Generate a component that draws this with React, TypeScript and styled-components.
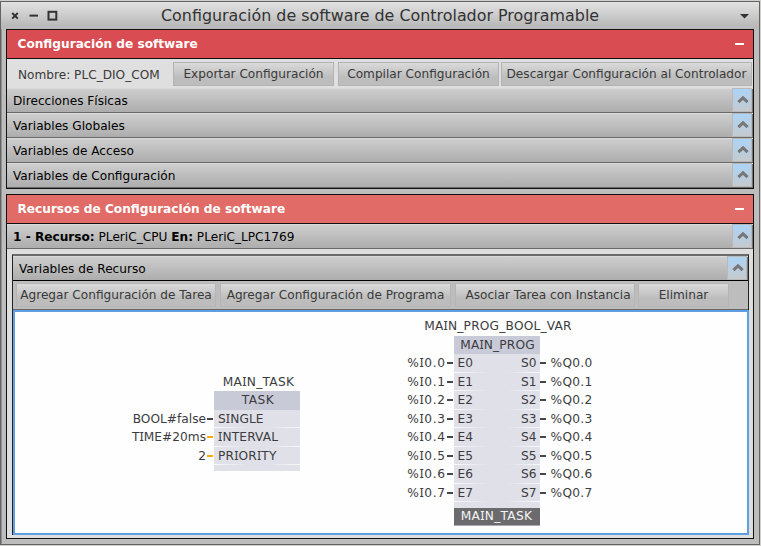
import React from 'react';
import styled, { createGlobalStyle, css } from 'styled-components';

const Global = createGlobalStyle`
  *, *::before, *::after { box-sizing: border-box; }
  body { margin: 0; background: #cfd0cd; }
`;

const Window = styled.div`
  width: 760px;
  height: 544px;
  margin-top: 1px;
  display: flex;
  flex-direction: column;
  border: 1px solid #636363;
  box-shadow: inset 1px 0 #929292;
  background: #bdbdbd;
  font-family: 'DejaVu Sans', sans-serif;
  font-size: 12.13px;
  color: #000;
  white-space: nowrap;
`;

const TitleBar = styled.header`
  flex: 0 0 27px;
  display: grid;
  grid-template-columns: 66px 1fr 28px;
  align-items: center;
  background: linear-gradient(#e2e2e2, #b9b9b9 90%);
  color: #333;
`;

const WindowTitle = styled.h1`
  margin: 0;
  padding-left: 94px;
  font-size: 15.9px;
  line-height: 25px;
  font-weight: normal;
`;

const WindowButtons = styled.svg`
  display: block;
  width: 66px;
  height: 26px;
`;

const MenuArrow = styled.svg`
  display: block;
  width: 28px;
  height: 26px;
`;

const Panel = styled.section<{ $height: number }>`
  height: ${(p) => p.$height}px;
  margin: 0 0 5px 5px;
  width: 748px;
  display: flex;
  flex-direction: column;
  border: 1px solid #111;
  background: #dedede;
`;

const PanelHeader = styled.header<{ $tone: string }>`
  flex: 0 0 29px;
  display: flex;
  align-items: center;
  justify-content: space-between;
  padding: 0 9px 0 10.5px;
  border-bottom: 1px solid #111;
  background: ${(p) => p.$tone};
  color: #fff;
  font-weight: bold;
`;

const Minus = styled.span`
  width: 9px;
  height: 2px;
  background: #fff;
`;

const Row = styled.div<{ $line?: string }>`
  flex: 0 0 25px;
  display: flex;
  align-items: center;
  justify-content: space-between;
  padding-left: 6px;
  border-bottom: 1px solid ${(p) => p.$line ?? '#6a6a6a'};
  box-shadow: inset 0 1px #dadada, inset -2px 0 #777;
  background: linear-gradient(#cfcfcf, #adadad);
`;

const RowLabel = styled.span`
  padding-top: 1px;
`;

const Expander = styled.button`
  width: 20px;
  height: 24px;
  margin-right: 1px;
  padding: 0 0 2px 1px;
  display: flex;
  align-items: center;
  justify-content: center;
  border: 1px solid #b9b9b9;
  background: linear-gradient(#acd4f6, #c5cacf);
`;

const ActionBar = styled.div`
  flex: 0 0 29px;
  display: flex;
  align-items: flex-start;
  padding-top: 3px;
  background: #dfdfdf;
  color: #3a3a3a;
`;

const ConfigName = styled.span`
  width: 166px;
  padding-left: 11px;
  line-height: 26px;
`;

const Button = styled.button<{ $width: number; $gap?: number; $shift?: number; $soft?: boolean }>`
  flex: 0 0 ${(p) => p.$width}px;
  height: 24px;
  margin: 0 ${(p) => p.$gap ?? 0}px 0 0;
  padding: 0 0 1px ${(p) => p.$shift ?? 0}px;
  border: 1px solid ${(p) => (p.$soft ? '#b5b5b5' : '#b3b3b3')};
  background: linear-gradient(#dadada, #bdbdbd 65%);
  color: #3a3a3a;
  font: inherit;
  line-height: 20px;
  white-space: nowrap;
`;

const ResourceBody = styled.div`
  flex: 1;
  display: flex;
  flex-direction: column;
  padding: 5px 4px 3px 5px;
  background: #dedede;
`;

const ResourceTools = styled.div`
  flex: 1;
  display: flex;
  flex-direction: column;
  border: solid #222;
  border-width: 2px 1px 0;
  border-top-color: #6c6c6c;
`;

const ResourceActions = styled(ActionBar)`
  padding: 2px 0 0 3px;
  border-bottom: 1px solid #666;
  background: #bdbdbd;
`;

const Canvas = styled.div`
  position: relative;
  flex: 0 0 225px;
  margin-right: -1px;
  border: 2px solid #5e9fe2;
  background: #fefefe;
  color: #3c3c40;
  font-size: 12.2px;
`;

const Node = styled.div<{ $x: number; $y: number; $columns: string }>`
  position: absolute;
  left: ${(p) => p.$x}px;
  top: ${(p) => p.$y}px;
  display: grid;
  grid-template-columns: ${(p) => p.$columns};
  grid-auto-rows: 18.5px;
  align-items: center;
  line-height: 18px;
`;

const centered = css`
  grid-column: 3;
  display: flex;
  justify-content: center;
  align-self: stretch;
`;

const NodeName = styled.div`
  ${centered}
  padding-left: 3px;
`;

const NodeType = styled.div`
  ${centered}
  padding-left: 2px;
  background: #c9cad8;
`;

const PinRow = styled.div`
  grid-column: 3;
  align-self: stretch;
  display: flex;
  justify-content: space-between;
  padding: 0 3px 0 4px;
  background:
    linear-gradient(90deg, #fafafc, #e0e0e8 40%, #e0e0e8 60%, #f8f8fb) bottom / 100% 1px no-repeat,
    #e0e0e8;
`;

const Operand = styled.span<{ $side: 'in' | 'out' }>`
  grid-column: ${(p) => (p.$side === 'in' ? 1 : 5)};
  justify-self: ${(p) => (p.$side === 'in' ? 'end' : 'start')};
  padding-right: ${(p) => (p.$side === 'in' ? '2px' : '0')};
  padding-left: ${(p) => (p.$side === 'out' ? '4px' : '0')};
`;

const Wire = styled.span<{ $side: 'in' | 'out'; $tone?: string }>`
  grid-column: ${(p) => (p.$side === 'in' ? 2 : 4)};
  height: 2px;
  margin-left: ${(p) => (p.$side === 'in' ? '-1px' : '0')};
  margin-right: 1px;
  background: ${(p) => p.$tone ?? '#45454a'};
`;

const NodeFoot = styled.div<{ $height: number }>`
  grid-column: 3;
  height: ${(p) => p.$height}px;
  align-self: start;
  background: #e0e0e8;
`;

const AssignedTask = styled.div`
  height: 18px;
  display: flex;
  justify-content: center;
  line-height: 16px;
  border-bottom: 1px solid #aaaab2;
  background: #6b6b6e;
  color: #f4f4f4;
`;

const FootGap = styled.div`
  height: 6px;
`;

const Caption = styled.span<{ $track: number }>`
  letter-spacing: ${(p) => p.$track}px;
`;

const Slab = styled.span`
  font-family: 'Noto Sans', sans-serif;
  font-size: 12.6px;
  line-height: 1px;
`;

function Label({ text, track = 0 }: { text: string; track?: number }) {
  return (
    <Caption $track={track}>
      {text.split(/(I)/).map((part, i) => (part === 'I' ? <Slab key={i}>I</Slab> : part))}
    </Caption>
  );
}

function Chevron() {
  return (
    <Expander>
      <svg width="12" height="9" viewBox="0 0 12 9">
        <path d="M1.4 7.2 L6 2.8 L10.6 7.2" fill="none" stroke="#777" strokeWidth="3" />
      </svg>
    </Expander>
  );
}

const variableRows = ['Direcciones Físicas', 'Variables Globales', 'Variables de Acceso', 'Variables de Configuración'];

const taskPins = [
  { operand: 'BOOL#false', name: 'SINGLE', track: 0.1, opTrack: 0, tone: '#45454a' },
  { operand: 'TIME#20ms', name: 'INTERVAL', track: 0.15, opTrack: 0, tone: '#ffa800' },
  { operand: '2', name: 'PRIORITY', track: 0.15, opTrack: 0, tone: '#ffa800' },
];

const programPins = [0, 1, 2, 3, 4, 5, 6, 7];

export default function App() {
  return (
    <>
      <Global />
      <Window>
        <TitleBar>
          <WindowButtons viewBox="0 0 66 26" fill="none" stroke="#333" strokeWidth="2">
            <path d="M11.2 10 L16.8 15.6 M16.8 10 L11.2 15.6" />
            <path d="M28.5 12.6 H37" />
            <rect x="47.5" y="8.8" width="7.8" height="7.8" />
          </WindowButtons>
          <WindowTitle>Configuración de software de Controlador Programable</WindowTitle>
          <MenuArrow viewBox="0 0 28 26">
            <path d="M9 11 H18 L13.5 15.5 Z" fill="#333" />
          </MenuArrow>
        </TitleBar>

        <Panel $height={160}>
          <PanelHeader $tone="#d94c51">
            Configuración de software
            <Minus />
          </PanelHeader>
          <ActionBar>
            <ConfigName>Nombre: PLC_DIO_COM</ConfigName>
            <Button $width={161} $gap={4}>Exportar Configuración</Button>
            <Button $width={161} $gap={2}>Compilar Configuración</Button>
            <Button $width={251}>Descargar Configuración al Controlador</Button>
          </ActionBar>
          {variableRows.map((name) => (
            <Row key={name}>
              <RowLabel>{name}</RowLabel>
              <Chevron />
            </Row>
          ))}
        </Panel>

        <Panel $height={345}>
          <PanelHeader $tone="#e16b66">
            Recursos de Configuración de software
            <Minus />
          </PanelHeader>
          <Row>
            <RowLabel>
              <b>1 - Recurso:</b> PLeriC_CPU <b>En:</b> PLeriC_LPC1769
            </RowLabel>
            <Chevron />
          </Row>
          <ResourceBody>
            <ResourceTools>
              <Row $line="#000">
                <RowLabel>Variables de Recurso</RowLabel>
                <Chevron />
              </Row>
              <ResourceActions>
                <Button $soft $width={200} $gap={4}>Agregar Configuración de Tarea</Button>
                <Button $soft $width={231} $gap={4}>Agregar Configuración de Programa</Button>
                <Button $soft $width={180} $gap={3} $shift={6}>Asociar Tarea con Instancia</Button>
                <Button $soft $width={91}>Eliminar</Button>
              </ResourceActions>
              <Canvas>
                <Node $x={115} $y={60.5} $columns="78px 6px 86px">
                  <NodeName><Label text="MAIN_TASK" track={0.3} /></NodeName>
                  <NodeType><Label text="TASK" track={0.45} /></NodeType>
                  {taskPins.map((pin) => (
                    <React.Fragment key={pin.name}>
                      <Operand $side="in"><Label text={pin.operand} track={pin.opTrack} /></Operand>
                      <Wire $side="in" $tone={pin.tone} />
                      <PinRow><Label text={pin.name} track={pin.track} /></PinRow>
                    </React.Fragment>
                  ))}
                  <NodeFoot $height={6} />
                </Node>

                <Node $x={383.5} $y={5} $columns="49px 6px 86px 7px 60px">
                  <NodeName><Label text="MAIN_PROG_BOOL_VAR" track={0.2} /></NodeName>
                  <NodeType><Label text="MAIN_PROG" track={0.15} /></NodeType>
                  {programPins.map((n) => (
                    <React.Fragment key={n}>
                      <Operand $side="in"><Label text={`%I0.${n}`} track={0.6} /></Operand>
                      <Wire $side="in" />
                      <PinRow>
                        <Label text={`E${n}`} />
                        <Label text={`S${n}`} />
                      </PinRow>
                      <Wire $side="out" />
                      <Operand $side="out"><Label text={`%Q0.${n}`} track={0.3} /></Operand>
                    </React.Fragment>
                  ))}
                  <NodeFoot $height={24}>
                    <FootGap />
                    <AssignedTask><Label text="MAIN_TASK" track={0.3} /></AssignedTask>
                  </NodeFoot>
                </Node>
              </Canvas>
            </ResourceTools>
          </ResourceBody>
        </Panel>
      </Window>
    </>
  );
}
